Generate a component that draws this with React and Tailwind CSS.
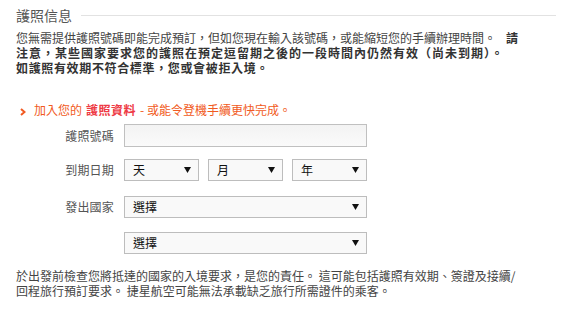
import React from "react";

function Arrow() {
  return (
    <svg width="7" height="6" viewBox="0 0 7 6" className="shrink-0">
      <polygon points="0,0 7,0 3.5,6" fill="#111" />
    </svg>
  );
}

function Select({ label, w }) {
  return (
    <div className={`${w} h-[22px] border border-[#bdbdbd] bg-[#f9f9f9] flex items-center justify-between pl-[8px] pr-[7px]`}>
      <span className="text-[12px] text-[#111] leading-none">{label}</span>
      <Arrow />
    </div>
  );
}

function Row({ label, children, className = "" }) {
  return (
    <div className={`flex items-center ${className}`}>
      <div className="w-[98px] text-right text-[12px] text-[#555] tracking-[0.2px] leading-none">{label}</div>
      <div className="ml-[10px] flex gap-[9px]">{children}</div>
    </div>
  );
}

export default function App() {
  return (
    <div className="w-[566px] h-[323px] bg-white pl-[16px] pr-[10px] font-['Noto_Sans_CJK_TC','Noto_Sans',sans-serif] overflow-hidden">
      <div className="h-[30px] flex items-center">
        <span className="text-[14px] text-[#555] leading-none">護照信息</span>
        <div className="flex-1 h-px bg-[#e2e2e2] ml-[9px]" />
      </div>

      <div className="text-[12px] leading-[15px] text-[#444]">
        <div className="whitespace-nowrap">
          您無需提供護照號碼即能完成預訂，但如您現在輸入該號碼，或能縮短您的手續辦理時間。<span className="inline-block w-[10px]" /><b className="text-[#333]">請</b>
        </div>
        <div className="font-bold text-[#333] tracking-[1px] whitespace-nowrap">
          注意，某些國家要求您的護照在預定逗留期之後的一段時間內仍然有效（尚未到期）。
        </div>
        <div className="font-bold text-[#333] tracking-[0.65px] whitespace-nowrap">
          如護照有效期不符合標準，您或會被拒入境。
        </div>
      </div>

      <div className="mt-[27px] h-[15px] leading-[15px] text-[12px] text-[#f15a22] whitespace-nowrap">
        <svg width="6" height="8" viewBox="0 0 6 8" className="inline-block align-[-1px] ml-[4px] mr-[8px]">
          <polyline points="1,1 4.5,4 1,7" fill="none" stroke="#f15a22" strokeWidth="2" />
        </svg>
        <span>加入您的</span>
        <b className="text-[#ee3a45] tracking-[0.5px] ml-[4px]">護照資料</b>
        <span className="ml-[4px]">- 或能令登機手續更快完成。</span>
      </div>

      <Row label="護照號碼" className="mt-[7px]">
        <div className="w-[243px] h-[23px] border border-[#c0c0c0] bg-gradient-to-b from-[#f3f3f3] to-[#fafafa]" />
      </Row>

      <Row label="到期日期" className="mt-[12px]">
        <Select label="天" w="w-[75px]" />
        <Select label="月" w="w-[75px]" />
        <Select label="年" w="w-[75px]" />
      </Row>

      <Row label="發出國家" className="mt-[15px]">
        <Select label="選擇" w="w-[243px]" />
      </Row>

      <Row label="" className="mt-[14px]">
        <Select label="選擇" w="w-[243px]" />
      </Row>

      <div className="mt-[14px] text-[12px] leading-[15px] text-[#444] whitespace-nowrap">
        <div>於出發前檢查您將抵達的國家的入境要求，是您的責任。 這可能包括護照有效期、簽證及接續/</div>
        <div>回程旅行預訂要求。 捷星航空可能無法承載缺乏旅行所需證件的乘客。</div>
      </div>
    </div>
  );
}
